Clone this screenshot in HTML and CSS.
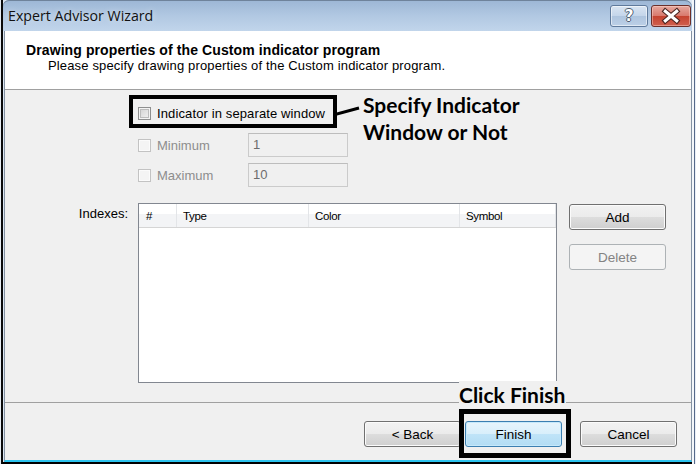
FILE: index.html
```html
<!DOCTYPE html>
<html>
<head>
<meta charset="utf-8">
<title>Expert Advisor Wizard</title>
<link rel="stylesheet" href="styles.css">
</head>
<body>
<div class="page">
  <div class="window">
    <div class="titlebar">
      <span class="title">Expert Advisor Wizard</span>
      <div class="caption-btns">
        <div class="cap help"><span class="q">?</span></div>
        <div class="cap close">
          <svg width="40" height="22" viewBox="0 0 40 22">
            <path d="M14 6 L26 16 M26 6 L14 16" stroke="#4a2420" stroke-width="5.5" stroke-linecap="square" fill="none"/>
            <path d="M14 6 L26 16 M26 6 L14 16" stroke="#ffffff" stroke-width="3.2" stroke-linecap="square" fill="none"/>
          </svg>
        </div>
      </div>
    </div>
    <div class="client">
      <header class="head">
        <div class="h-title">Drawing properties of the Custom indicator program</div>
        <div class="h-sub">Please specify drawing properties of the Custom indicator program.</div>
      </header>
      <main class="body">
        <div class="annot-box">
          <div class="chk-row"><span class="chk"></span><span>Indicator in separate window</span></div>
          <svg class="connector" width="28" height="12" viewBox="0 0 28 12">
            <path d="M0 9 L26 2" stroke="#000" stroke-width="3" fill="none"/>
          </svg>
          <div class="annot-text">Specify Indicator<br>Window or Not</div>
        </div>
        <div class="field-row">
          <span class="chk disabled"></span>
          <span class="lbl">Minimum</span>
          <div class="input">1</div>
        </div>
        <div class="field-row second">
          <span class="chk disabled"></span>
          <span class="lbl">Maximum</span>
          <div class="input">10</div>
        </div>
        <div class="indexes">
          <div class="idx-label">Indexes:</div>
          <div class="listview">
            <div class="lv-head">
              <div class="col c1">#</div>
              <div class="col c2">Type</div>
              <div class="col c3">Color</div>
              <div class="col c4">Symbol</div>
            </div>
          </div>
          <div class="side-btns">
            <div class="btn">Add</div>
            <div class="btn disabled">Delete</div>
          </div>
        </div>
      </main>
      <footer class="foot">
        <div class="annot-click">Click Finish</div>
        <div class="btn wide">&lt; Back</div>
        <div class="finish-wrap">
          <div class="btn wide primary">Finish</div>
          <span class="hl"></span>
        </div>
        <div class="btn wide cancel">Cancel</div>
      </footer>
    </div>
  </div>
  <div class="edge"></div>
</div>
</body>
</html>
```

FILE: styles.css
```css
html, body {
  margin: 0;
  padding: 0;
}
body {
  width: 696px;
  height: 464px;
  overflow: hidden;
  font-family: "Liberation Sans", Arial, sans-serif;
  font-size: 13px;
  color: #000;
  background: #eef2f7;
}
.page {
  display: flex;
  height: 464px;
  padding-left: 1px;
  box-sizing: border-box;
  background: #e6ecf3;
}
.window {
  width: 691px;
  height: 464px;
  box-sizing: border-box;
  border-left: 2px solid #0a0a0a;
  border-bottom: 2px solid #000;
  background: #dce7f3;
  display: flex;
  flex-direction: column;
}
.edge {
  width: 4px;
  height: 464px;
  background: linear-gradient(to right, #f4f7fa 0 2px, #56698a 2px 3px, #e9eef4 3px);
}

/* title bar */
.titlebar {
  height: 31px;
  flex: none;
  display: flex;
  align-items: flex-start;
  background: linear-gradient(#9cb6d5, #b1c8e2 50%, #c1d5eb);
  border-top-right-radius: 7px;
  border-top-left-radius: 6px;
  box-shadow: inset 0 1px 0 #6f839b;
}
.title {
  font-family: "Open Sans", "Noto Sans", sans-serif;
  font-size: 14.2px;
  line-height: 20px;
  padding: 6px 0 0 5px;
  color: #111;
  text-shadow: 0 0 6px rgba(255,255,255,0.6);
}
.caption-btns {
  margin-left: auto;
  display: flex;
  gap: 3px;
  padding-top: 5px;
  padding-right: 1px;
}
.cap {
  height: 22px;
  box-sizing: border-box;
  border: 1px solid #5f7a9c;
  border-radius: 3px;
  display: flex;
  align-items: center;
  justify-content: center;
}
.help {
  width: 38px;
  background: linear-gradient(#d9e5f2, #c4d5ea 50%, #aec4de 50%, #bcd0e7);
  box-shadow: inset 0 0 0 1px rgba(255,255,255,0.55);
}
.q {
  font-family: "DejaVu Sans", sans-serif;
  font-weight: bold;
  font-size: 15px;
  color: #fff;
  text-shadow: 1px 0 0 #4d5c70, -1px 0 0 #4d5c70, 0 1px 0 #4d5c70, 0 -1px 0 #4d5c70;
}
.close {
  width: 40px;
  border-color: #6b2f2a;
  background: linear-gradient(#e6a89e, #d8786c 50%, #c5422f 50%, #d0604e);
  box-shadow: inset 0 0 0 1px rgba(255,220,210,0.45);
}
.close svg { display: block; }

/* client */
.client {
  margin-left: 1px;
  flex: 1;
  display: flex;
  flex-direction: column;
  border-left: 1px solid #8492a3;
  border-right: 1px solid #8492a3;
  border-bottom: 2px solid #2cc3ee;
  background: #f0f0f0;
}
.head {
  height: 59px;
  box-sizing: border-box;
  flex: none;
  background: #fff;
  border-bottom: 1px solid #a0a0a0;
  padding-top: 11px;
  line-height: 16px;
}
.h-title {
  font-weight: bold;
  font-size: 14px;
  letter-spacing: 0.1px;
  padding-left: 21px;
}
.h-sub {
  padding-left: 43px;
  letter-spacing: 0.15px;
}

.body {
  height: 313px;
  box-sizing: border-box;
  flex: none;
  padding-top: 5px;
  border-bottom: 1px solid #a0a0a0;
}
.annot-box {
  position: relative;
  margin-left: 124px;
  width: 208px;
  height: 33px;
  box-sizing: border-box;
  border: 4px solid #000;
}
.chk-row {
  display: flex;
  align-items: center;
  height: 25px;
  padding: 3px 0 0 5px;
  box-sizing: border-box;
  gap: 6px;
  letter-spacing: 0.12px;
}
.chk {
  width: 13px;
  height: 13px;
  box-sizing: border-box;
  flex: none;
  border: 1px solid #8e8f8f;
  background: linear-gradient(135deg, #cfcfcf, #f5f5f5);
  box-shadow: inset 0 0 0 1px #f3f3f3, inset 0 0 0 2px #bcbcbc;
}
.chk.disabled {
  border-color: #c3c3c3;
  background: #f4f4f4;
  box-shadow: inset 0 0 0 1px #fbfbfb;
}
.connector {
  position: absolute;
  left: 100%;
  top: 7px;
}
.annot-text {
  position: absolute;
  left: 230px;
  top: -8px;
  width: 200px;
  font-family: Lato, "Open Sans", sans-serif;
  font-weight: bold;
  font-size: 21px;
  line-height: 27px;
  color: #000;
}
.field-row {
  display: flex;
  align-items: center;
  margin: 5px 0 0 133px;
  height: 24px;
}
.field-row.second { margin-top: 6px; }
.field-row .chk { margin-right: 6px; }
.lbl {
  width: 91px;
  color: #8d8d8d;
}
.input {
  width: 100px;
  height: 24px;
  box-sizing: border-box;
  border: 1px solid #cbcbcb;
  border-top-color: #bdbdbd;
  background: #f0f0f0;
  color: #6d6d6d;
  padding: 3px 0 0 4px;
  line-height: 16px;
}
.indexes {
  display: flex;
  align-items: flex-start;
  margin-top: 16px;
}
.idx-label {
  width: 123px;
  text-align: right;
  margin-right: 10px;
  padding-top: 3px;
  line-height: 16px;
}
.listview {
  width: 419px;
  height: 180px;
  box-sizing: border-box;
  border: 1px solid #828790;
  background: #fff;
}
.lv-head {
  display: flex;
  height: 24px;
  box-sizing: border-box;
  border-bottom: 1px solid #d5d5d5;
  background: linear-gradient(#ffffff 0 45%, #f3f4f6 45%);
}
.col {
  box-sizing: border-box;
  border-right: 1px solid #e3e5e8;
  padding-left: 6px;
  padding-top: 2px;
  font-size: 11.5px;
  letter-spacing: -0.35px;
  line-height: 21px;
}
.c1 { width: 38px; padding-left: 7px; }
.c2 { width: 132px; }
.c3 { width: 151px; }
.c4 { width: 96px; }
.side-btns {
  display: flex;
  flex-direction: column;
  gap: 14px;
  margin-left: 12px;
  margin-top: 1px;
}

.btn {
  width: 97px;
  height: 26px;
  box-sizing: border-box;
  border: 1px solid #707070;
  border-radius: 3px;
  background: linear-gradient(#f2f2f2, #ebebeb 50%, #dddddd 50%, #cfcfcf);
  box-shadow: inset 0 0 0 1px #fbfbfb;
  display: flex;
  align-items: center;
  justify-content: center;
  font-size: 13.5px;
  color: #000;
}
.btn.disabled {
  border-color: #adb2b5;
  background: #f4f4f4;
  color: #838383;
  box-shadow: none;
}
.btn.primary {
  border-color: #3c7fb1;
  background: linear-gradient(#e8f5fc, #d8effb 50%, #c0e4f8 50%, #b2dcf4);
  box-shadow: inset 0 0 0 1px #c7e9fb;
}

.foot {
  position: relative;
  flex: 1;
  display: flex;
  align-items: flex-start;
  justify-content: flex-end;
  padding: 18px 14px 0 0;
}
.finish-wrap {
  position: relative;
  margin-left: 4px;
  margin-right: 18px;
}
.hl {
  position: absolute;
  left: -6px;
  top: -12px;
  right: -9px;
  bottom: -11px;
  border: 5px solid #000;
}
.annot-click {
  position: absolute;
  left: 454px;
  top: -22px;
  font-family: Lato, "Open Sans", sans-serif;
  font-weight: bold;
  font-size: 21px;
  line-height: 27px;
  background: #f0f0f0;
  padding-right: 1px;
}
```
